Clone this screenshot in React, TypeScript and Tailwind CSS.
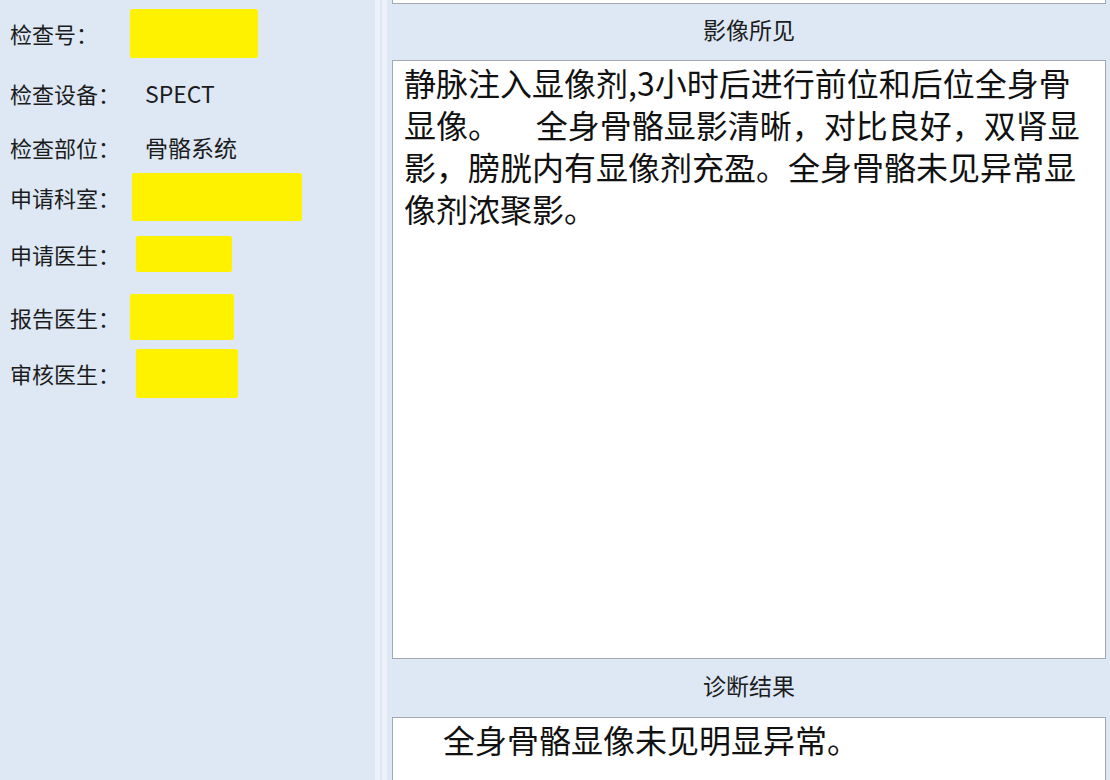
import React from 'react';

const font = "font-['Microsoft_YaHei','Noto_Sans_CJK_SC',sans-serif]";

type Row = {
  label: string;
  h: string;
  value?: string;
  box?: string;
};

const rows: Row[] = [
  { label: '检查号：', h: 'h-[58px]', box: 'ml-0 w-[128px] h-[49px]' },
  { label: '检查设备：', h: 'h-[62px]', value: 'SPECT' },
  { label: '检查部位：', h: 'h-[46px]', value: '骨骼系统' },
  { label: '申请科室：', h: 'h-[54px]', box: 'ml-[2px] w-[170px] h-[48px]' },
  { label: '申请医生：', h: 'h-[60px]', box: 'ml-[6px] w-[96px] h-[36px]' },
  { label: '报告医生：', h: 'h-[66px]', box: 'ml-0 w-[104px] h-[46px]' },
  { label: '审核医生：', h: 'h-[46px]', box: 'ml-[6px] w-[102px] h-[49px]' },
];

const findings = [
  '静脉注入显像剂,3小时后进行前位和后位全身骨',
  '显像。     全身骨骼显影清晰，对比良好，双肾显',
  '影，膀胱内有显像剂充盈。全身骨骼未见异常显',
  '像剂浓聚影。',
];

function InfoPanel() {
  return (
    <div className="w-[374px] shrink-0 bg-[#dee8f5] pt-[4px]">
      {rows.map((r) => (
        <div key={r.label} className={`flex items-center ${r.h}`}>
          <span className="w-[130px] shrink-0 pl-[10px] text-[22px] text-[#1c1c1c] whitespace-nowrap">
            {r.label}
          </span>
          {r.value && (
            <span className="ml-[15px] text-[23px] text-[#1c1c1c]">{r.value}</span>
          )}
          {r.box && <div className={`rounded-[2px] bg-[#fff200] ${r.box}`} />}
        </div>
      ))}
    </div>
  );
}

function Splitter() {
  return (
    <div className="flex w-[16px] shrink-0 bg-[#dee8f5]">
      <div className="ml-[1px] w-[5px] bg-[#edf2fa]" />
      <div className="ml-[2px] w-[5px] bg-[#edf2fa]" />
    </div>
  );
}

function ReportPanel() {
  return (
    <div className="flex min-w-0 flex-1 flex-col bg-[#dee8f5] pl-[2px] pr-[4px]">
      <div className="h-[4px] shrink-0 border-x border-b border-[#a3a8b0] bg-white" />
      <div className="flex h-[56px] shrink-0 items-center justify-center pb-[6px] text-[23px] text-[#1c1c1c]">
        影像所见
      </div>
      <div className="h-[599px] shrink-0 border border-[#a3a8b0] bg-white px-[11px] text-[32px] leading-[42px] text-[#111]">
        {findings.map((line) => (
          <div key={line} className="whitespace-pre">
            {line}
          </div>
        ))}
      </div>
      <div className="flex h-[58px] shrink-0 items-center justify-center pb-[6px] text-[23px] text-[#1c1c1c]">
        诊断结果
      </div>
      <div className="h-[90px] shrink-0 border border-[#a3a8b0] bg-white pl-[50px] text-[32px] leading-[42px] text-[#111]">
        全身骨骼显像未见明显异常。
      </div>
    </div>
  );
}

export default function App() {
  return (
    <div className={`flex h-[780px] w-[1110px] overflow-hidden ${font}`}>
      <InfoPanel />
      <Splitter />
      <ReportPanel />
    </div>
  );
}
